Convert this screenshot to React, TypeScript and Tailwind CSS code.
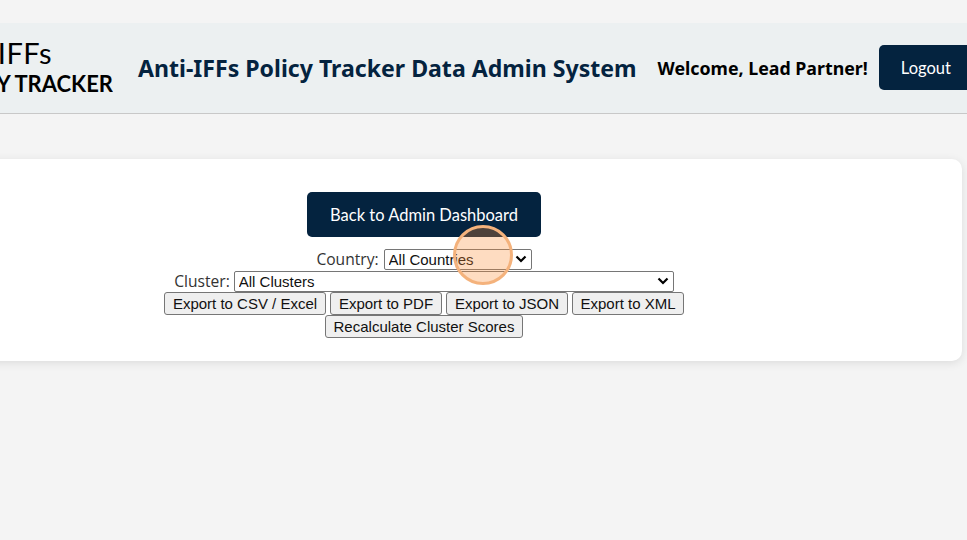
import React from 'react';

const Chevron: React.FC<{ className: string }> = ({ className }) => (
  <svg viewBox="0 0 12 8" className={className} fill="none" stroke="#000" strokeWidth="2.2">
    <path d="M1.5 1.5 6 6l4.5-4.5" />
  </svg>
);

const controlFont = "font-['Liberation_Sans',Arial,sans-serif] text-[15px] leading-[17px] text-[#111]";
const nativeButton = `${controlFont} h-[23px] rounded-[3px] border border-[#767676] bg-[#efefef] align-top`;

const App: React.FC = () => {
  return (
    <div className="relative h-[540px] w-[967px] overflow-hidden bg-[#f4f4f4] font-['Open_Sans',sans-serif]">
      <div className="ml-[-134px] w-[1240px] pt-[23px]">
        <header className="flex h-[91px] items-center border-b border-[#c8c8c8] bg-[#ecf0f1]">
          <div className="mb-[2px] w-[247px] shrink-0 overflow-hidden whitespace-nowrap text-right font-['Lato',sans-serif] text-black">
            <div className="pr-[61px] pb-[2px] text-[29px] leading-[30px] tracking-[0.5px]">ANTI-IFFs</div>
            <div className="text-[22px] leading-[27px] font-bold">POLICY TRACKER</div>
          </div>
          <h1 className="ml-[25px] whitespace-nowrap font-['Noto_Sans',sans-serif] text-[23.1px] leading-8 font-bold text-[#04233f]">
            Anti-IFFs Policy Tracker Data Admin System
          </h1>
          <span className="ml-[21px] whitespace-nowrap font-['Noto_Sans',sans-serif] text-[17.8px] font-bold text-black">
            Welcome, Lead Partner!
          </span>
          <button className="mb-[2px] ml-[11px] h-[45px] w-[110px] rounded-[5px] bg-[#04233f] pt-[2px] pl-[22px] text-left font-['Lato',sans-serif] text-[16.5px] text-white">
            Logout
          </button>
        </header>

        <main className="mt-[45px] ml-5 flex h-[202px] w-[1076px] flex-col items-center rounded-[10px] bg-white pt-[33px] shadow-[0_2px_10px_rgba(0,0,0,0.1)]">
          <button className="h-[45px] w-[234px] rounded-[5px] bg-[#04233f] pt-px font-['Lato',sans-serif] text-[16.5px] text-white">
            Back to Admin Dashboard
          </button>

          <div className="mt-[11px] flex h-[22px] items-center gap-[5px] text-[15.6px] text-[#333]">
            <label htmlFor="country" className="pt-px">Country:</label>
            <div className="relative">
              <select id="country" className={`${controlFont} block h-[21px] w-[148px] appearance-none rounded-[2px] border border-[#767676] bg-white pl-1`}>
                <option>All Countries</option>
              </select>
              <Chevron className="absolute top-[6px] right-[5px] h-[8px] w-[12px]" />
            </div>
          </div>

          <div className="flex h-[22px] items-center gap-1 text-[15.6px] text-[#333]">
            <label htmlFor="cluster" className="pt-px">Cluster:</label>
            <div className="relative">
              <select id="cluster" className={`${controlFont} block h-[21px] w-[440px] appearance-none rounded-[2px] border border-[#767676] bg-white pl-1`}>
                <option>All Clusters</option>
              </select>
              <Chevron className="absolute top-[6px] right-[5px] h-[8px] w-[12px]" />
            </div>
          </div>

          <div className="flex h-[23px] items-start gap-1">
            <button className={`${nativeButton} w-[162px]`}>Export to CSV / Excel</button>
            <button className={`${nativeButton} w-[112px]`}>Export to PDF</button>
            <button className={`${nativeButton} w-[122px]`}>Export to JSON</button>
            <button className={`${nativeButton} w-[112px]`}>Export to XML</button>
          </div>
          <button className={`${nativeButton} w-[198px]`}>Recalculate Cluster Scores</button>
        </main>
      </div>

      {/* click marker from the screen recording */}
      <div className="absolute top-[225px] left-[453px] h-[60px] w-[60px] rounded-full border-[3px] border-[#f4b27c] bg-[#fb8a32]/30" />
    </div>
  );
};

export default App;
